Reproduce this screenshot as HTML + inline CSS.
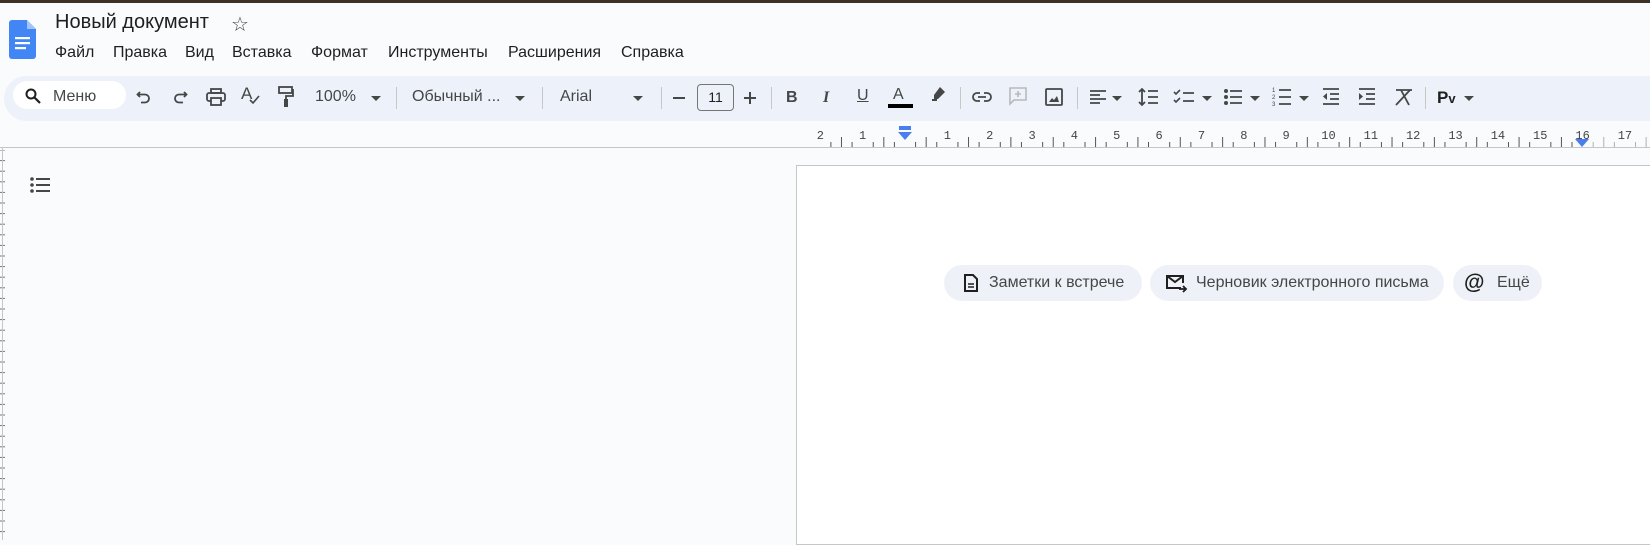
<!DOCTYPE html>
<html><head><meta charset="utf-8">
<style>
*{margin:0;padding:0;box-sizing:border-box}
body{width:1650px;height:540px;overflow:hidden;background:#f9fbfd;font-family:"Liberation Sans","DejaVu Sans",sans-serif;color:#1f1f1f;position:relative}
.a{position:absolute}
.topbar{left:0;top:0;width:1650px;height:3px;background:#3c3029}
.title{left:55px;top:11px;font-size:20px;color:#1f1f1f}
.menu{top:44px;font-size:16px;color:#1f1f1f}
.tb{left:4px;top:76px;width:1646px;height:45px;background:#edf2fa;border-radius:24px 0 0 24px}
.search{left:13px;top:81px;width:113px;height:28px;background:#fff;border-radius:14px}
.t{font-size:16px;color:#444746}
.sep{width:1px;height:22px;background:#c7c7c7;top:87px}
.arr{width:0;height:0;border-left:5px solid transparent;border-right:5px solid transparent;border-top:5px solid #444746;top:96px}
svg{position:absolute}
.rl{left:0;top:147px;width:1650px;height:1px;background:#c4c7c5}
.page{left:796px;top:165px;width:860px;height:380px;background:#fff;border:1px solid #c4c7c5}
.chip{top:265px;height:36px;background:#eef2f8;border-radius:18px;font-size:16px;color:#444746;line-height:36px;white-space:nowrap}
</style></head><body>
<div class="a topbar"></div>
<svg style="left:9px;top:20px" width="27" height="39" viewBox="0 0 27 39"><path d="M3 0h15l9 9v27a3 3 0 0 1-3 3H3a3 3 0 0 1-3-3V3a3 3 0 0 1 3-3z" fill="#4285f4"/><path d="M18 0l9 9h-9z" fill="#a1c2fa"/><rect x="6" y="17" width="15" height="2.2" fill="#fff"/><rect x="6" y="22" width="15" height="2.2" fill="#fff"/><rect x="6" y="27" width="11" height="2.2" fill="#fff"/></svg>
<div class="a title">Новый документ</div>
<div class="a" style="left:231px;top:12px;font-size:20px;color:#444746">☆</div>
<div class="a menu" style="left:55px">Файл</div>
<div class="a menu" style="left:113px">Правка</div>
<div class="a menu" style="left:185px">Вид</div>
<div class="a menu" style="left:232px">Вставка</div>
<div class="a menu" style="left:311px">Формат</div>
<div class="a menu" style="left:388px">Инструменты</div>
<div class="a menu" style="left:508px">Расширения</div>
<div class="a menu" style="left:621px">Справка</div>

<div class="a tb"></div>
<div class="a search"></div>
<svg style="left:25px;top:88px" width="16" height="16" viewBox="0 0 16 16"><circle cx="6" cy="6" r="4.5" fill="none" stroke="#1f1f1f" stroke-width="2"/><path d="M9.5 9.5L15 15" stroke="#1f1f1f" stroke-width="2.2"/></svg>
<div class="a t" style="left:53px;top:88px;color:#444746">Меню</div>
<svg style="left:136px;top:89px" width="16" height="16" viewBox="0 0 16 16"><path d="M4 3L1.5 5.5 4 8" fill="none" stroke="#444746" stroke-width="1.8"/><path d="M2 5.5h7a4 4 0 0 1 0 8H5" fill="none" stroke="#444746" stroke-width="1.8"/></svg>
<svg style="left:172px;top:89px" width="16" height="16" viewBox="0 0 16 16"><path d="M12 3l2.5 2.5L12 8" fill="none" stroke="#444746" stroke-width="1.8"/><path d="M14 5.5H7a4 4 0 0 0 0 8h4" fill="none" stroke="#444746" stroke-width="1.8"/></svg>
<svg style="left:206px;top:88px" width="20" height="18" viewBox="0 0 20 18"><rect x="5" y="1" width="10" height="4" fill="none" stroke="#444746" stroke-width="1.8"/><rect x="1" y="5" width="18" height="8" rx="2" fill="none" stroke="#444746" stroke-width="1.8"/><rect x="5" y="10" width="10" height="7" fill="#edf2fa" stroke="#444746" stroke-width="1.8"/></svg>
<div class="a" style="left:241px;top:84px;font-size:17px;color:#444746">A</div>
<svg style="left:249px;top:95px" width="12" height="10"><path d="M1 5l3 3 6-7" fill="none" stroke="#444746" stroke-width="1.6"/></svg>
<svg style="left:278px;top:86px" width="16" height="22" viewBox="0 0 16 22"><rect x="1" y="1" width="13" height="6" fill="none" stroke="#444746" stroke-width="1.8"/><path d="M14 4h1v6H8v4" fill="none" stroke="#444746" stroke-width="1.8"/><rect x="6" y="13" width="4" height="8" fill="#444746"/></svg>
<div class="a t" style="left:315px;top:88px;font-size:16px">100%</div>
<div class="a arr" style="left:371px"></div>
<div class="a sep" style="left:396px"></div>
<div class="a t" style="left:412px;top:88px">Обычный ...</div>
<div class="a arr" style="left:515px"></div>
<div class="a sep" style="left:542px"></div>
<div class="a t" style="left:560px;top:88px">Arial</div>
<div class="a arr" style="left:633px"></div>
<div class="a sep" style="left:661px"></div>
<div class="a" style="left:673px;top:97px;width:12px;height:2px;background:#444746"></div>
<div class="a" style="left:697px;top:84px;width:37px;height:27px;border:1px solid #747775;border-radius:4px;font-size:14px;text-align:center;line-height:25px;color:#1f1f1f">11</div>
<div class="a" style="left:744px;top:97px;width:12px;height:2px;background:#444746"></div>
<div class="a" style="left:749px;top:92px;width:2px;height:12px;background:#444746"></div>
<div class="a sep" style="left:771px"></div>
<div class="a" style="left:786px;top:89px;font-size:16px;font-weight:bold;color:#444746">B</div>
<div class="a" style="left:823px;top:89px;font-size:16px;font-style:italic;font-weight:bold;font-family:'Liberation Serif',serif;color:#444746">I</div>
<div class="a" style="left:857px;top:87px;font-size:16px;color:#444746;text-decoration:underline">U</div>
<div class="a" style="left:893px;top:86px;font-size:16px;color:#444746">A</div>
<div class="a" style="left:888px;top:104px;width:25px;height:4px;background:#000"></div>
<svg style="left:930px;top:86px" width="16" height="16" viewBox="0 0 16 16"><path d="M10 1l5 5-7 7H4v-4z" fill="#444746"/><path d="M2 14h5" stroke="#444746" stroke-width="2"/></svg>
<div class="a sep" style="left:960px"></div>
<svg style="left:972px;top:91px" width="20" height="12" viewBox="0 0 20 12"><path d="M8 2H5a4 4 0 0 0 0 8h3M12 2h3a4 4 0 0 1 0 8h-3M6 6h8" fill="none" stroke="#444746" stroke-width="1.8"/></svg>
<svg style="left:1009px;top:87px" width="18" height="19" viewBox="0 0 18 19"><path d="M1 1h16v12H5l-4 4z" fill="none" stroke="#b7b9bb" stroke-width="1.6"/><path d="M9 4v6M6 7h6" stroke="#b7b9bb" stroke-width="1.6"/></svg>
<svg style="left:1045px;top:88px" width="18" height="18" viewBox="0 0 18 18"><rect x="1" y="1" width="16" height="16" rx="1" fill="none" stroke="#444746" stroke-width="1.8"/><path d="M4 14l3-4 2 2 3-4 2 6z" fill="#444746"/></svg>
<div class="a sep" style="left:1077px"></div>
<svg style="left:1089px;top:89px" width="18" height="16"><path d="M1 2h16M1 6h10M1 10h16M1 14h10" stroke="#444746" stroke-width="1.8"/></svg>
<div class="a arr" style="left:1112px"></div>
<svg style="left:1137px;top:87px" width="22" height="20"><path d="M5 2v16M2 5l3-3 3 3M2 15l3 3 3-3" fill="none" stroke="#444746" stroke-width="1.8"/><path d="M11 4h10M11 10h10M11 16h10" stroke="#444746" stroke-width="1.8"/></svg>
<svg style="left:1173px;top:88px" width="22" height="18"><path d="M1 4l2 2 4-4M1 12l2 2 4-4" fill="none" stroke="#444746" stroke-width="1.6"/><path d="M10 5h11M10 13h11" stroke="#444746" stroke-width="1.8"/></svg>
<div class="a arr" style="left:1202px"></div>
<svg style="left:1223px;top:88px" width="20" height="18"><circle cx="3" cy="3" r="2" fill="#444746"/><circle cx="3" cy="9" r="2" fill="#444746"/><circle cx="3" cy="15" r="2" fill="#444746"/><path d="M7 3h12M7 9h12M7 15h12" stroke="#444746" stroke-width="1.8"/></svg>
<div class="a arr" style="left:1250px"></div>
<svg style="left:1272px;top:86px" width="20" height="21"><text x="0" y="6" font-size="6" fill="#444746" font-family="Liberation Sans">1</text><text x="0" y="13" font-size="6" fill="#444746" font-family="Liberation Sans">2</text><text x="0" y="20" font-size="6" fill="#444746" font-family="Liberation Sans">3</text><path d="M7 4h12M7 11h12M7 18h12" stroke="#444746" stroke-width="1.8"/></svg>
<div class="a arr" style="left:1299px"></div>
<svg style="left:1322px;top:87px" width="18" height="20"><path d="M1 2h16M8 7h9M8 12h9M1 17h16" stroke="#444746" stroke-width="1.8"/><path d="M5 6v7L1 9.5z" fill="#444746"/></svg>
<svg style="left:1358px;top:87px" width="18" height="20"><path d="M1 2h16M8 7h9M8 12h9M1 17h16" stroke="#444746" stroke-width="1.8"/><path d="M1 6v7l4-3.5z" fill="#444746"/></svg>
<svg style="left:1394px;top:88px" width="20" height="18"><path d="M2 2h16M7 2l8 15M2 17L16 2" stroke="#444746" stroke-width="1.8" fill="none"/></svg>
<div class="a sep" style="left:1425px"></div>
<div class="a" style="left:1437px;top:88px;font-size:17px;font-weight:bold;color:#1f1f1f">P<span style="font-size:13px">v</span></div>
<div class="a arr" style="left:1464px"></div>

<svg style="left:0;top:120px" width="1650" height="30" id="ruler"></svg>
<div class="a rl"></div>
<svg style="left:0;top:150px" width="6" height="390" id="vr"></svg>
<div class="a" style="left:2px;top:148px;width:1px;height:392px;background:#c4c7c5"></div>

<svg style="left:30px;top:177px" width="22" height="16" viewBox="0 0 22 16"><circle cx="2" cy="2" r="1.8" fill="#444746"/><circle cx="2" cy="8" r="1.8" fill="#444746"/><circle cx="2" cy="14" r="1.8" fill="#444746"/><path d="M6 2h14M6 8h14M6 14h14" stroke="#444746" stroke-width="2"/></svg>

<div class="a page"></div>
<div class="a chip" style="left:944px;width:198px;padding-left:45px">Заметки к встрече</div>
<svg style="left:964px;top:274px" width="14" height="18" viewBox="0 0 14 18"><path d="M1 1h8l4 4v12H1z" fill="none" stroke="#1f1f1f" stroke-width="2"/><path d="M4 10h6M4 13h6" stroke="#1f1f1f" stroke-width="1.6"/></svg>
<div class="a chip" style="left:1150px;width:294px;padding-left:46px">Черновик электронного письма</div>
<svg style="left:1166px;top:275px" width="22" height="18" viewBox="0 0 22 18"><path d="M15 13H1V1h16v7" fill="none" stroke="#1f1f1f" stroke-width="2"/><path d="M1 1l8 6 8-6" fill="none" stroke="#1f1f1f" stroke-width="2"/><path d="M13 14h7M17 11l3 3-3 3" fill="none" stroke="#1f1f1f" stroke-width="1.8"/></svg>
<div class="a chip" style="left:1453px;width:89px;padding-left:44px">Ещё</div>
<div class="a" style="left:1464px;top:271px;font-size:21px;font-weight:bold;color:#1f1f1f">@</div>

<script>
var s='',x0=905,cm=42.35;
for(var i=-3*4;i<=18*4;i++){var x=x0+i*cm/4;if(x<811||x>1650)continue;var h=(i%4==0)?0:(i%2==0?10:5);
if(i%4!=0){s+='<line x1="'+x+'" x2="'+x+'" y1="'+(27-h)+'" y2="27" stroke="'+(x>1582?'#b0b0b0':'#555')+'" stroke-width="1"/>';}
else if(i!=0){s+='<text x="'+x+'" y="19" font-size="12" text-anchor="middle" fill="#444" font-family="Liberation Mono">'+Math.abs(i/4)+'</text>';}}
s+='<rect x="899" y="6" width="12" height="4" fill="#4a7ef0"/><path d="M898 12h14l-7 8z" fill="#4a7ef0"/><path d="M1575 19h14l-7 8z" fill="#4a7ef0"/>';
document.getElementById('ruler').innerHTML=s;
var v='';for(var y=0;y<390;y+=10.6){v+='<line x1="0" x2="5" y1="'+y+'" y2="'+y+'" stroke="#777"/>';}
document.getElementById('vr').innerHTML=v;
</script>
</body></html>
